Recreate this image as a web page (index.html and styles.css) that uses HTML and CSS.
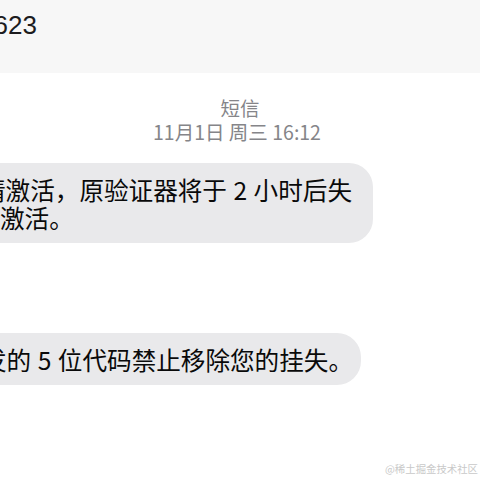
FILE: index.html
```
<!DOCTYPE html>
<html lang="zh-CN">
<head>
<meta charset="utf-8">
<title>短信</title>
<link rel="stylesheet" href="styles.css">
</head>
<body>
<div class="screen">
  <header class="topbar">
    <div class="number">6623</div>
  </header>
  <div class="meta">
    <div class="meta-title">短信</div>
    <div class="meta-date">11月1日 周三 16:12</div>
  </div>
  <div class="thread">
    <div class="bubble bubble-one">
      <div class="line line-a">请激活，原验证器将于 2 小时后失</div>
      <div class="line line-b">激活。</div>
    </div>
    <div class="bubble bubble-two">
      <div class="line line-c">发的 5 位代码禁止移除您的挂失。</div>
    </div>
  </div>
  <div class="watermark">@稀土掘金技术社区</div>
</div>
</body>
</html>
```

FILE: styles.css
```
html, body {
  margin: 0;
  padding: 0;
  background: #ffffff;
}

.screen {
  position: relative;
  width: 480px;
  height: 480px;
  overflow: hidden;
  background: #ffffff;
  font-family: "Noto Sans CJK SC", "Noto Sans", sans-serif;
}

.topbar {
  height: 73px;
  background: #f7f7f7;
  box-sizing: border-box;
  padding-top: 10px;
}

.number {
  margin-left: -21px;
  font-family: "Liberation Sans", Arial, sans-serif;
  font-size: 26px;
  line-height: 30px;
  color: #1c1c1e;
}

.meta {
  margin-top: 23px;
  text-align: center;
  color: #858589;
  font-size: 19.5px;
  line-height: 24px;
}

.meta-date {
  font-size: 19.5px;
  margin-left: -6px;
}

.thread {
  display: flex;
  flex-direction: column;
  align-items: flex-start;
  margin-top: 19px;
  gap: 90px;
}

.bubble {
  box-sizing: border-box;
  background: #e9e9eb;
  border-radius: 24px;
  padding: 12px 14px;
  color: #0a0a0a;
  font-size: 24.6px;
  line-height: 28px;
}

.bubble-one {
  margin-left: -33px;
  width: 406px;
}

.bubble-two {
  margin-left: -32px;
  width: 393px;
}

.line {
  white-space: nowrap;
  word-spacing: 1px;
}

.line-b {
  margin-left: 19px;
}

.watermark {
  position: absolute;
  right: 2px;
  bottom: 4px;
  font-size: 10.4px;
  line-height: 14px;
  color: #c9c9c9;
  font-family: "Noto Sans CJK SC", serif;
}
```
